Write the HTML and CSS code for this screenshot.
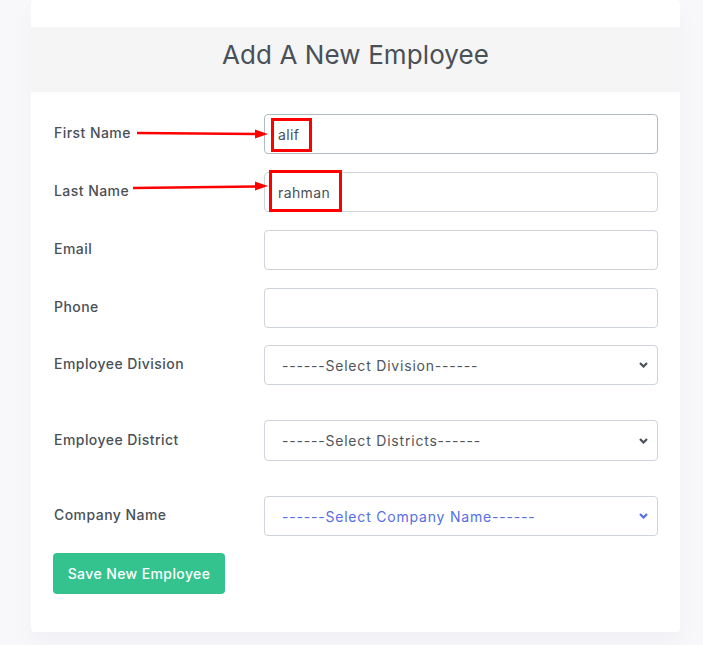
FILE: index.html
```html
<!DOCTYPE html>
<html>
<head>
<meta charset="utf-8">
<link rel="stylesheet" href="styles.css">
</head>
<body>
<div class="page">
  <div class="card">
    <div class="card-top"></div>
    <div class="card-header"><h2 class="title">Add A New Employee</h2></div>
    <form class="card-body">
      <div class="row">
        <label class="label">First Name</label>
        <input class="control control-focus" type="text" value="alif">
      </div>
      <div class="row">
        <label class="label">Last Name</label>
        <input class="control" type="text" value="rahman">
      </div>
      <div class="row">
        <label class="label">Email</label>
        <input class="control" type="text">
      </div>
      <div class="row row-phone">
        <label class="label">Phone</label>
        <input class="control" type="text">
      </div>
      <div class="row row-select">
        <label class="label">Employee Division</label>
        <select class="control select"><option>------Select Division------</option></select>
      </div>
      <div class="row row-select row-select-2">
        <label class="label">Employee District</label>
        <select class="control select select-tall"><option>------Select Districts------</option></select>
      </div>
      <div class="row row-last">
        <label class="label">Company Name</label>
        <select class="control select select-blue"><option>------Select Company Name------</option></select>
      </div>
      <button type="button" class="btn">Save New Employee</button>
    </form>
  </div>
  <svg class="annot" width="703" height="645" viewBox="0 0 703 645">
    <line x1="137" y1="133" x2="258" y2="134" stroke="#f00" stroke-width="2.5"/>
    <polygon points="268,134 255,129.5 255,138.5" fill="#f00"/>
    <line x1="133" y1="188" x2="258" y2="186.5" stroke="#f00" stroke-width="2.5"/>
    <polygon points="268,186 255,181.5 255,190.5" fill="#f00"/>
    <rect x="272.5" y="119.5" width="38" height="31" fill="none" stroke="#f00" stroke-width="3"/>
    <rect x="270.5" y="171.5" width="70" height="39" fill="none" stroke="#f00" stroke-width="3"/>
  </svg>
</div>
</body>
</html>
```

FILE: styles.css
```css
html, body {
  margin: 0;
  padding: 0;
  background: #f8f8fb;
  font-family: "Inter", "Open Sans", sans-serif;
  color: #495057;
}

.page {
  position: relative;
  width: 703px;
  height: 645px;
  padding: 0 23px 0 31px;
  box-sizing: border-box;
}

.card {
  background: #fff;
  border-radius: 4px;
  box-shadow: 0 12px 24px rgba(18, 38, 63, 0.03);
  padding-bottom: 38px;
}

.card-top {
  height: 27px;
}

.card-header {
  background: #f5f5f5;
  height: 65px;
  box-sizing: border-box;
  padding-bottom: 11px;
  display: flex;
  align-items: center;
  justify-content: center;
}

.title {
  margin: 0;
  font-size: 26px;
  font-weight: 400;
  color: #495057;
  letter-spacing: 0.1px;
}

.card-body {
  padding: 22px 22px 0 22px;
  display: flex;
  flex-direction: column;
}

.row {
  display: flex;
  align-items: center;
  margin-bottom: 18px;
}

.row-phone {
  margin-bottom: 17px;
}

.row-select {
  margin-bottom: 35px;
}

.row-select-2 {
  margin-bottom: 35px;
}

.row-last {
  margin-bottom: 17px;
}

.label {
  width: 211px;
  font-size: 14px;
  font-weight: 500;
  color: #495057;
  letter-spacing: 0.45px;
  padding-left: 1px;
  padding-bottom: 3px;
  box-sizing: border-box;
}

.control {
  width: 394px;
  height: 40px;
  box-sizing: border-box;
  border: 1px solid #ced4da;
  border-radius: 4px;
  padding: 0 13px;
  font-family: inherit;
  font-size: 14px;
  letter-spacing: 0.4px;
  color: #495057;
  background: #fff;
  outline: none;
}

.control-focus {
  border-color: #b1bbc4;
}

.select {
  appearance: none;
  -webkit-appearance: none;
  padding-left: 17px;
  letter-spacing: 0.8px;
  color: #50565c;
  background-image: url("data:image/svg+xml;utf8,<svg xmlns='http://www.w3.org/2000/svg' width='9' height='6' viewBox='0 0 9 6'><path d='M1 1 L4.5 4.5 L8 1' fill='none' stroke='%23495057' stroke-width='2.2'/></svg>");
  background-repeat: no-repeat;
  background-position: right 9px center;
  background-size: 9px 6px;
}

.select-tall {
  height: 41px;
}

.select-blue {
  color: #556ee6;
  background-image: url("data:image/svg+xml;utf8,<svg xmlns='http://www.w3.org/2000/svg' width='9' height='6' viewBox='0 0 9 6'><path d='M1 1 L4.5 4.5 L8 1' fill='none' stroke='%23556ee6' stroke-width='2.2'/></svg>");
}

.btn {
  align-self: flex-start;
  width: 172px;
  height: 41px;
  border: none;
  border-radius: 4px;
  background: #34c38f;
  color: #fff;
  font-family: inherit;
  font-size: 14px;
  font-weight: 500;
  letter-spacing: 0.4px;
  cursor: pointer;
}

.annot {
  position: absolute;
  left: 0;
  top: 0;
  pointer-events: none;
}
```
